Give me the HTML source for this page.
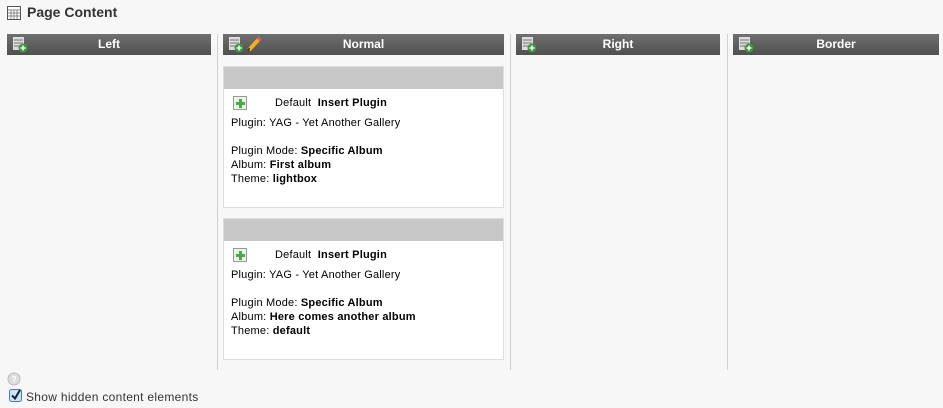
<!DOCTYPE html>
<html><head><style>
body{margin:0;width:943px;height:408px;background:#f7f7f7;font-family:"Liberation Sans",Verdana,sans-serif;font-size:11px;color:#000;position:relative;overflow:hidden}
.abs{position:absolute}
.title{left:27px;top:4px;font-size:14px;font-weight:bold;color:#333}
.hdr{position:absolute;top:34px;height:21px;background:linear-gradient(#707070,#4f4f4f);color:#fff;font-weight:bold;font-size:12px;line-height:21px;text-align:center}
.sep{position:absolute;top:34px;height:336px;width:1px;background:#d0d0d0}
.card{position:absolute;left:223px;width:281px;background:#fff;border:1px solid #ddd;box-sizing:border-box}
.card .g{height:22px;background:#c8c8c8}
.card .b{padding:7px 6px 0 7px;line-height:14px;letter-spacing:0.2px}
</style></head><body>
<svg class="abs" style="left:7px;top:6px" width="14" height="14"><rect x="0.5" y="0.5" width="13" height="13" fill="#fff" stroke="#555"/><path d="M1 4h12M1 7h12M1 10h12M4 4v9M7 4v9M10 4v9" stroke="#888"/></svg>
<div class="abs title">Page Content</div>

<div class="hdr" style="left:7px;width:204px">Left</div>
<div class="hdr" style="left:223px;width:281px">Normal</div>
<div class="hdr" style="left:516px;width:204px">Right</div>
<div class="hdr" style="left:733px;width:206px">Border</div>
<svg class="abs" style="left:13px;top:37px" width="16" height="16"><rect x="0" y="0" width="11" height="13" fill="#ddd"/><path d="M1 3h9M1 6h9M1 9h9" stroke="#777"/><circle cx="10" cy="11" r="4.5" fill="#3c9a3c"/><path d="M10 8.5v5M7.5 11h5" stroke="#fff" stroke-width="1.5"/></svg>
<svg class="abs" style="left:229px;top:37px" width="16" height="16"><rect x="0" y="0" width="11" height="13" fill="#ddd"/><path d="M1 3h9M1 6h9M1 9h9" stroke="#777"/><circle cx="10" cy="11" r="4.5" fill="#3c9a3c"/><path d="M10 8.5v5M7.5 11h5" stroke="#fff" stroke-width="1.5"/></svg>
<svg class="abs" style="left:246px;top:36px" width="16" height="16"><path d="M3 14L13 3" stroke="#f0b020" stroke-width="4"/><path d="M12 4l2-2" stroke="#e06060" stroke-width="4"/><path d="M2 15l1.5-3" stroke="#333" stroke-width="1.5"/></svg>
<svg class="abs" style="left:522px;top:37px" width="16" height="16"><rect x="0" y="0" width="11" height="13" fill="#ddd"/><path d="M1 3h9M1 6h9M1 9h9" stroke="#777"/><circle cx="10" cy="11" r="4.5" fill="#3c9a3c"/><path d="M10 8.5v5M7.5 11h5" stroke="#fff" stroke-width="1.5"/></svg>
<svg class="abs" style="left:739px;top:37px" width="16" height="16"><rect x="0" y="0" width="11" height="13" fill="#ddd"/><path d="M1 3h9M1 6h9M1 9h9" stroke="#777"/><circle cx="10" cy="11" r="4.5" fill="#3c9a3c"/><path d="M10 8.5v5M7.5 11h5" stroke="#fff" stroke-width="1.5"/></svg>

<div class="sep" style="left:217px"></div>
<div class="sep" style="left:510px"></div>
<div class="sep" style="left:727px"></div>

<div class="card" style="top:66px;height:142px">
<div class="g"></div>
<div class="b">
<div style="height:20px;position:relative"><svg class="abs" style="left:2px;top:0px" width="14" height="14"><rect x="0.5" y="0.5" width="13" height="13" fill="#e8f5e0" stroke="#999"/><path d="M3 6h3V3h3v3h3v3H9v3H6V9H3z" fill="#4aa84a"/></svg><span style="position:absolute;left:44px;top:0">Default&nbsp;&nbsp;<b>Insert Plugin</b></span></div>
<div>Plugin: YAG - Yet Another Gallery</div><br>
<div>Plugin Mode: <b>Specific Album</b></div>
<div>Album: <b>First album</b></div>
<div>Theme: <b>lightbox</b></div>
</div></div>

<div class="card" style="top:218px;height:142px">
<div class="g"></div>
<div class="b">
<div style="height:20px;position:relative"><svg class="abs" style="left:2px;top:0px" width="14" height="14"><rect x="0.5" y="0.5" width="13" height="13" fill="#e8f5e0" stroke="#999"/><path d="M3 6h3V3h3v3h3v3H9v3H6V9H3z" fill="#4aa84a"/></svg><span style="position:absolute;left:44px;top:0">Default&nbsp;&nbsp;<b>Insert Plugin</b></span></div>
<div>Plugin: YAG - Yet Another Gallery</div><br>
<div>Plugin Mode: <b>Specific Album</b></div>
<div>Album: <b>Here comes another album</b></div>
<div>Theme: <b>default</b></div>
</div></div>

<svg class="abs" style="left:7px;top:372px" width="14" height="14"><circle cx="7" cy="7" r="6" fill="#ddd" stroke="#bbb"/><text x="7" y="10.5" font-size="9" text-anchor="middle" fill="#fff" font-family="Liberation Sans" font-weight="bold">?</text></svg>
<svg class="abs" style="left:9px;top:389px" width="13" height="13"><rect x="0.5" y="0.5" width="12" height="12" rx="2" fill="#cfe3f7" stroke="#4a7bb5"/><path d="M3 6.5l3 3L11 1" stroke="#123" stroke-width="2" fill="none"/></svg>
<div class="abs" style="left:26px;top:390px;font-size:12px;color:#333;letter-spacing:0.3px">Show hidden content elements</div>
</body></html>
